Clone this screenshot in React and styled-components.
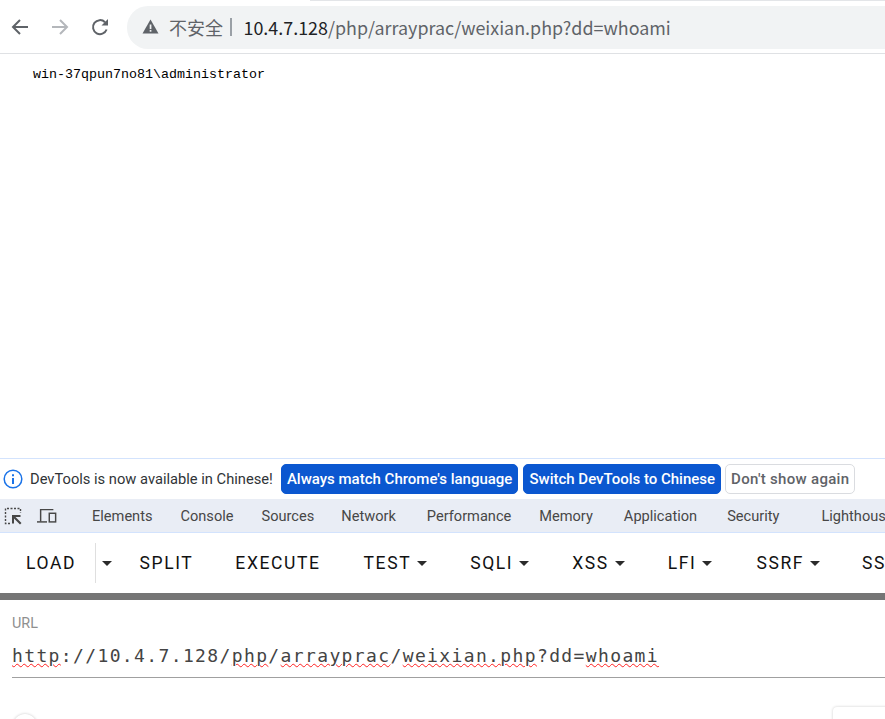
import * as React from 'react';
import styled, { createGlobalStyle } from 'styled-components';

const GlobalStyle = createGlobalStyle`
  html, body {
    margin: 0;
    padding: 0;
    background: #fff;
    overflow: hidden;
  }
`;

const Page = styled.div`
  position: relative;
  width: 885px;
  height: 719px;
  overflow: hidden;
  display: flex;
  flex-direction: column;
  font-family: Roboto, sans-serif;
`;

const TabEdge = styled.div`
  height: 1px;
  margin-left: 310px;
  background: #e3e5e8;
  flex: none;
`;

const Toolbar = styled.div`
  height: 53px;
  flex: none;
  display: flex;
  align-items: center;
  box-sizing: border-box;
  border-bottom: 1px solid #dfe1e4;
  padding: 0 0 0 7px;
`;

const NavButton = styled.button`
  width: 26px;
  height: 26px;
  padding: 0;
  margin-right: ${p => p.$gap}px;
  border: 0;
  background: none;
  color: ${p => p.$color};
  display: flex;
  align-items: center;
  justify-content: center;
`;

const Omnibox = styled.div`
  flex: 1;
  height: 43px;
  margin-top: 1px;
  box-sizing: border-box;
  border-radius: 21px 0 0 21px;
  background: #f1f3f4;
  display: flex;
  align-items: center;
  padding: 0 0 2px 14.5px;
  font-family: "Noto Sans CJK SC", "Open Sans", sans-serif;
  font-size: 17.9px;
  white-space: nowrap;
`;

const SecurityLabel = styled.span`
  color: #5f6368;
  margin-left: 10.5px;
  font-size: 18px;
`;

const Divider = styled.span`
  width: 2px;
  height: 18px;
  background: #9aa0a6;
  margin: 0 12px 0 6.5px;
`;

const Host = styled.span`
  color: #202124;
`;

const UrlPath = styled.span`
  color: #5f6368;
`;

const Viewport = styled.div`
  height: 404px;
  flex: none;
  box-sizing: border-box;
  padding: 12px 33px;
  font-family: "Liberation Mono", monospace;
  font-size: 13.33px;
  line-height: 18px;
  color: #000;
`;

const InfoBar = styled.div`
  height: 41px;
  flex: none;
  box-sizing: border-box;
  border-top: 1px solid #d3e3fd;
  display: flex;
  align-items: center;
  padding-left: 3px;
  font-size: 14.7px;
  color: #303437;
`;

const InfoText = styled.span`
  margin: 0 8px 0 7px;
  white-space: nowrap;
`;

const InfoButton = styled.button`
  height: 30px;
  padding: 0 5px;
  margin-right: ${p => p.$gap}px;
  border-radius: 5px;
  box-sizing: border-box;
  white-space: nowrap;
  font-family: Roboto, sans-serif;
  font-size: 15px;
  font-weight: 500;
  letter-spacing: ${p => (p.$primary ? 0 : 0.3)}px;
  border: 1px solid ${p => (p.$primary ? '#0b57d0' : '#dadce0')};
  background: ${p => (p.$primary ? '#0b57d0' : '#fff')};
  color: ${p => (p.$primary ? '#fff' : '#5f6368')};
`;

const TabStrip = styled.div`
  height: 34px;
  flex: none;
  box-sizing: border-box;
  border-bottom: 1px solid #d3e3fd;
  background: #e9edf5;
  display: flex;
  align-items: center;
  padding-left: 3px;
  overflow: hidden;
`;

const ToolIcon = styled.span`
  display: flex;
  width: 20px;
  margin-right: ${p => p.$gap}px;
`;

const StripDivider = styled.span`
  width: 1px;
  height: 20px;
  background: #d3e3fd;
  margin: 0 22px 0 0;
`;

const Tab = styled.span`
  font-size: 14.6px;
  color: #474747;
  white-space: nowrap;
  margin-right: ${p => p.$gap}px;
`;

const HackBar = styled.div`
  height: 60px;
  flex: none;
  display: flex;
  align-items: center;
  padding-left: 26px;
  white-space: nowrap;
  overflow: hidden;
`;

const HackItem = styled.span`
  display: flex;
  align-items: center;
  flex: none;
  font-size: 17.5px;
  font-weight: 450;
  letter-spacing: 1.6px;
  color: #111;
  margin-right: ${p => p.$gap}px;
`;

const Caret = styled.i`
  display: block;
  width: 0;
  height: 0;
  margin-left: ${p => p.$left}px;
  border-left: 5px solid transparent;
  border-right: 5px solid transparent;
  border-top: 5px solid #2b2b2b;
`;

const SplitLine = styled.span`
  width: 1px;
  height: 40px;
  flex: none;
  background: #dfdfdf;
  margin: 0 6px 0 0;
`;

const Resizer = styled.div`
  height: 7px;
  flex: none;
  background: #757575;
`;

const UrlForm = styled.div`
  height: 119px;
  flex: none;
  box-sizing: border-box;
  padding: 15px 0 0 12px;
`;

const FieldLabel = styled.div`
  font-size: 14.4px;
  line-height: 17px;
  color: #8f8f8f;
`;

const UrlField = styled.div`
  width: 873px;
  height: 43px;
  box-sizing: border-box;
  border-bottom: 1px solid #a0a0a0;
  margin-top: 3px;
  padding-top: 8px;
  font-family: "DejaVu Sans Mono", monospace;
  font-size: 18px;
  line-height: 26px;
  letter-spacing: 1.37px;
  color: #444;
  white-space: nowrap;
`;

const Misspelt = styled.span`
  text-decoration: underline wavy #ff2020 1.25px;
  text-underline-offset: 1px;
`;

const FloatingDot = styled.div`
  position: absolute;
  left: 13px;
  top: 714px;
  width: 24px;
  height: 24px;
  border-radius: 50%;
  background: #fff;
  box-shadow: 0 0 3px rgba(0, 0, 0, 0.22);
`;

const FloatingCard = styled.div`
  position: absolute;
  left: 833px;
  top: 707px;
  width: 80px;
  height: 40px;
  border-radius: 4px;
  background: #fff;
  box-shadow: 0 0 3px rgba(0, 0, 0, 0.2);
`;

const FlippedWrap = styled.span`
  display: flex;
  transform: scaleX(-1);
`;

const BackIcon = () => (
  <svg width="20" height="20" viewBox="0 0 20 20" fill="none" stroke="currentColor" strokeWidth="2">
    <path d="M18 10H3M10 3l-7 7 7 7" />
  </svg>
);

const ForwardIcon = () => (
  <FlippedWrap><BackIcon /></FlippedWrap>
);

const ReloadIcon = () => (
  <svg width="20" height="20" viewBox="0 0 20 20" fill="none" stroke="currentColor" strokeWidth="2">
    <path d="M16.6 12.5A7 7 0 1 1 15 5.2" />
    <path d="M18 2v6.5H11.5" fill="currentColor" stroke="none" />
  </svg>
);

const WarningIcon = () => (
  <svg width="17" height="15" viewBox="0 0 17 15">
    <path d="M8.5 0.5 16.5 14.5H0.5Z" fill="#5f6368" />
    <rect x="7.7" y="5.5" width="1.7" height="4.6" fill="#f1f3f4" />
    <rect x="7.7" y="11" width="1.7" height="1.7" fill="#f1f3f4" />
  </svg>
);

const InfoIcon = () => (
  <svg width="20" height="20" viewBox="0 0 20 20" fill="none" stroke="#1a73e8" strokeWidth="1.5">
    <circle cx="10" cy="10" r="8.8" />
    <path d="M10 9v6" strokeWidth="2" />
    <path d="M10 5.2v2" strokeWidth="2" />
  </svg>
);

const InspectIcon = () => (
  <svg width="20" height="20" viewBox="0 0 20 20" fill="none" stroke="#474747">
    <path d="M7 17.5H2.5V2.5h15V7" strokeDasharray="2 1.5" strokeWidth="1.4" />
    <path d="M9 9h8.5v2H12.5l6 6-1.5 1.5-6-6v5H9Z" fill="#474747" stroke="none" />
  </svg>
);

const DeviceIcon = () => (
  <svg width="22" height="20" viewBox="0 0 22 20" fill="none" stroke="#474747" strokeWidth="1.6">
    <path d="M4 16V3h14" />
    <path d="M0 16.5h11" />
    <rect x="13.5" y="7" width="7" height="9.5" />
  </svg>
);

const tabs = [
  ['Elements', 28],
  ['Console', 28],
  ['Sources', 27],
  ['Network', 31],
  ['Performance', 28],
  ['Memory', 31],
  ['Application', 30],
  ['Security', 42],
  ['Lighthouse', 0],
];

const hackItems = [
  ['SPLIT', false, 42],
  ['EXECUTE', false, 43],
  ['TEST', true, 43],
  ['SQLI', true, 43],
  ['XSS', true, 43],
  ['LFI', true, 44],
  ['SSRF', true, 42],
  ['SSTI', true, 0],
];

export default function App() {
  return (
    <Page>
      <GlobalStyle />
      <TabEdge />
      <Toolbar>
        <NavButton $color="#5f6368" $gap={14}><BackIcon /></NavButton>
        <NavButton $color="#b4b7bb" $gap={14}><ForwardIcon /></NavButton>
        <NavButton $color="#5f6368" $gap={14}><ReloadIcon /></NavButton>
        <Omnibox>
          <WarningIcon />
          <SecurityLabel>不安全</SecurityLabel>
          <Divider />
          <Host>10.4.7.128</Host>
          <UrlPath>/php/arrayprac/weixian.php?dd=whoami</UrlPath>
        </Omnibox>
      </Toolbar>
      <Viewport>win-37qpun7no81\administrator</Viewport>
      <InfoBar>
        <InfoIcon />
        <InfoText>DevTools is now available in Chinese!</InfoText>
        <InfoButton $primary $gap={5}>Always match Chrome's language</InfoButton>
        <InfoButton $primary $gap={4}>Switch DevTools to Chinese</InfoButton>
        <InfoButton $gap={0}>Don't show again</InfoButton>
      </InfoBar>
      <TabStrip>
        <ToolIcon $gap={14}><InspectIcon /></ToolIcon>
        <ToolIcon $gap={13}><DeviceIcon /></ToolIcon>
        <StripDivider />
        {tabs.map(([name, gap]) => <Tab key={name} $gap={gap}>{name}</Tab>)}
      </TabStrip>
      <HackBar>
        <HackItem $gap={18.5}>LOAD</HackItem>
        <SplitLine />
        <HackItem $gap={28}><Caret $left={0} /></HackItem>
        {hackItems.map(([name, caret, gap]) => (
          <HackItem key={name} $gap={gap}>
            {name}
            {caret && <Caret $left={6} />}
          </HackItem>
        ))}
      </HackBar>
      <Resizer />
      <UrlForm>
        <FieldLabel>URL</FieldLabel>
        <UrlField>
          <Misspelt>http</Misspelt>://10.4.7.128/<Misspelt>php</Misspelt>/<Misspelt>arrayprac</Misspelt>/<Misspelt>weixian.php</Misspelt>?dd=<Misspelt>whoami</Misspelt>
        </UrlField>
      </UrlForm>
      <FloatingDot />
      <FloatingCard />
    </Page>
  );
}
